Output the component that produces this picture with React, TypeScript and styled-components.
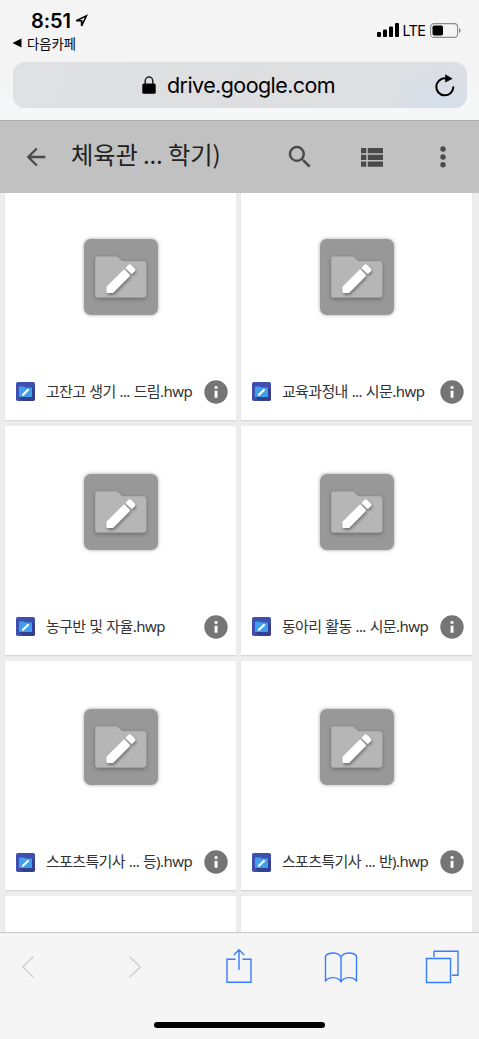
import React from 'react';
import styled, { createGlobalStyle } from 'styled-components';

const GlobalStyle = createGlobalStyle`
  * { box-sizing: border-box; }
  body { margin: 0; background: #f5f5f5; }
  svg { display: block; flex: none; }
`;

const Screen = styled.div`
  width: 479px;
  height: 1039px;
  overflow: hidden;
  display: flex;
  flex-direction: column;
  background: #f5f5f5;
  font-family: Inter, 'Noto Sans CJK KR', sans-serif;
  color: #000;
`;

const BrowserTop = styled.header`
  height: 121px;
  flex: none;
  background: linear-gradient(180deg, #f4f4f4 0%, #f4f4f4 50%, #f6f7f8 100%);
  border-bottom: 1px solid #ababab;
`;

const StatusBar = styled.div`
  height: 62px;
  display: flex;
  justify-content: space-between;
  padding: 9px 18px 0 12px;
`;

const Clock = styled.div`
  display: flex;
  align-items: center;
  height: 24px;
  padding-left: 19px;
  gap: 3px;
  font-size: 20px;
  font-weight: 600;
  letter-spacing: -0.1px;
`;

const BackToApp = styled.div`
  display: flex;
  align-items: center;
  height: 20px;
  gap: 5px;
  font-size: 13.3px;
  font-weight: 400;
`;

const Signals = styled.div`
  display: flex;
  align-items: center;
  height: 20px;
  margin-top: 11px;
`;

const Network = styled.span`
  width: 23px;
  font-size: 14.5px;
  font-weight: 400;
  letter-spacing: -0.7px;
  margin: 1px 4.5px 0 3.5px;
`;

const AddressBar = styled.div`
  height: 46px;
  margin: 0 12.5px;
  border-radius: 12px;
  display: flex;
  align-items: center;
  padding: 0 12px 0 129.5px;
  background:
    radial-gradient(ellipse 60px 50px at 94% 90%, #d5deeb 0%, rgba(213, 222, 235, 0) 100%),
    linear-gradient(100deg, #dfe1e2 0%, #dddee0 50%, #dedfe1 100%);
`;

const Domain = styled.span`
  flex: 1;
  margin: -1px 0 0 11px;
  font-size: 21.5px;
  letter-spacing: -0.58px;
`;

const DriveBar = styled.nav`
  height: 72px;
  flex: none;
  display: flex;
  align-items: center;
  padding: 0 28px 0 22px;
  background: #c1c1c1;
  color: #4a4a4a;
`;

const FolderTitle = styled.h1`
  margin: 0 0 6px 21px;
  width: 214px;
  white-space: nowrap;
  font: 400 24.3px/36px 'Noto Sans CJK KR', sans-serif;
  letter-spacing: -0.15px;
  color: #222;
`;

const Actions = styled.div`
  display: grid;
  grid-template-columns: 76px 74px 16px;
  align-items: center;
`;

const Files = styled.main`
  flex: none;
  height: 739px;
  overflow: hidden;
  background: #ededed;
`;

const Grid = styled.div`
  display: grid;
  grid-template-columns: 231px 231px;
  grid-auto-rows: 229.3px;
  gap: 6px 5px;
  margin: -2.5px 0 0 5.3px;
`;

const Card = styled.article`
  display: flex;
  flex-direction: column;
  align-items: center;
  padding-top: 48px;
  background: #fff;
  box-shadow: 0 1px 1px #d6d6d6;
`;

const Preview = styled.div`
  width: 74px;
  height: 76px;
  border-radius: 7px;
  background: #989898;
  box-shadow: 0 0 3px 1px rgba(0, 0, 0, 0.22);
`;

const FileRow = styled.div`
  width: 100%;
  height: 30px;
  margin-top: 62px;
  padding: 0 8.5px 0 11px;
  display: flex;
  align-items: center;
`;

const FileName = styled.span`
  flex: 1;
  margin: -2px 0 0 10.6px;
  white-space: nowrap;
  font: 400 15px/26px 'Noto Sans', 'Noto Sans CJK KR', sans-serif;
  letter-spacing: -0.62px;
  word-spacing: 0.6px;
  color: #333;
`;

const Extension = styled.span`
  letter-spacing: -0.5px;
`;

const BrowserBottom = styled.footer`
  flex: 1;
  border-top: 1px solid #c8c8c8;
  background: #f5f5f5;
  display: flex;
  flex-direction: column;
  align-items: center;
`;

const Tools = styled.div`
  width: 100%;
  height: 68px;
  padding-left: 20px;
  display: grid;
  grid-template-columns: 107px 98.5px 98.5px 101px 34px;
  align-items: center;
  color: #377dff;
`;

const HomeIndicator = styled.div`
  width: 171px;
  height: 6px;
  margin-top: 21px;
  border-radius: 3px;
  background: #000;
`;

const FolderArt = ({ id }: { id: number }) => (
  <svg width="74" height="76" viewBox="0.7 0 74 76">
    <defs>
      <filter id={`folder-shadow-${id}`} x="-20%" y="-20%" width="150%" height="150%">
        <feDropShadow dx="0" dy="1.5" stdDeviation="2" floodOpacity="0.32" />
      </filter>
      <filter id={`pencil-shadow-${id}`} x="-30%" y="-30%" width="170%" height="170%">
        <feDropShadow dx="1" dy="2" stdDeviation="1.8" floodOpacity="0.38" />
      </filter>
    </defs>
    <path
      filter={`url(#folder-shadow-${id})`}
      fill="#b6b6b6"
      d="M14 17.5h18.5c1 0 1.800.3 2.500 1l4 3.700h20.500a3.500 3.500 0 0 1 3.500 3.500V55a3.500 3.500 0 0 1-3.500 3.500h-45A2.500 2.500 0 0 1 12 56V19.500a2 2 0 0 1 2-2Z"
    />
    <g filter={`url(#pencil-shadow-${id})`} fill="#fff">
      <path d="M39.700 31.200a1.500 1.500 0 0 1 2.200 0l4.100 4.100a1.500 1.500 0 0 1 0 2.200L29.600 54h-5.200a1.200 1.200 0 0 1-1.200-1.200v-5.100Z" />
      <path d="m43 27.900 2-2a2 2 0 0 1 2.800 0l3.600 3.600a2 2 0 0 1 0 2.800l-2 2a1.300 1.300 0 0 1-1.800 0L43 29.700a1.300 1.300 0 0 1 0-1.800Z" />
    </g>
  </svg>
);

const FileTypeIcon = () => (
  <svg width="19" height="19" viewBox="0 0 19 19">
    <rect width="19" height="19" rx="1.800" fill="#3f4fb0" />
    <path d="m3 15 13-10 3 3v9.500L17.500 19H7Z" fill="#343f91" />
    <path d="M3 4.500h5.300l1 1H16V15H3Z" fill="#409feb" />
    <path d="m6 12.300 5.900-5.900 1.500 1.500L7.500 13.700H6Z" fill="#fff" />
  </svg>
);

const InfoIcon = () => (
  <svg width="24" height="24" viewBox="0 0 24 24">
    <circle cx="12" cy="12" r="11.700" fill="#757575" />
    <path d="M10.600 6.200h2.900v2.500h-2.900zM10.600 10.700h2.900v7h-2.900z" fill="#fff" />
  </svg>
);

const files = [
  '고잔고 생기 ... 드림',
  '교육과정내 ... 시문',
  '농구반 및 자율',
  '동아리 활동 ... 시문',
  '스포츠특기사 ... 등)',
  '스포츠특기사 ... 반)',
];

export default function App() {
  return (
    <Screen>
      <GlobalStyle />
      <BrowserTop>
        <StatusBar>
          <div>
            <Clock>
              8:51
              <svg width="14" height="14" viewBox="0 0 14 14" fill="none" stroke="#000" strokeWidth="1.600" strokeLinejoin="miter">
                <path d="M2.200 6.700 12.400 1.800 7.600 12V6.700Z" />
              </svg>
            </Clock>
            <BackToApp>
              <svg width="10" height="10" viewBox="0 0 10 10"><path d="M.5 5 9.500.5v9Z" /></svg>
              다음카페
            </BackToApp>
          </div>
          <Signals>
            <svg width="22" height="14" viewBox="0 0 22 14">
              <rect x="0" y="9" width="4" height="5" rx="1" />
              <rect x="6" y="6.500" width="4" height="7.500" rx="1" />
              <rect x="12" y="3.500" width="4" height="10.500" rx="1" />
              <rect x="18" y="0" width="4" height="14" rx="1" />
            </svg>
            <Network>LTE</Network>
            <svg width="31" height="15" viewBox="0 0 31 15">
              <rect x=".6" y=".6" width="27" height="13.800" rx="3.500" fill="none" stroke="#8c8c8c" strokeWidth="1.100" />
              <rect x="2.500" y="2.500" width="10.500" height="10" rx="1.700" />
              <path d="M29 5v5c1-.5 1.700-1.400 1.700-2.500S30 5.500 29 5Z" fill="#8c8c8c" />
            </svg>
          </Signals>
        </StatusBar>
        <AddressBar>
          <svg width="14" height="18" viewBox="0 0 14 18">
            <rect x=".3" y="7.500" width="13.400" height="10.300" rx="1.500" />
            <path d="M3.200 8V5a3.800 4 0 0 1 7.600 0v3" fill="none" stroke="#222" strokeWidth="1.500" />
          </svg>
          <Domain>drive.google.com</Domain>
          <svg width="20" height="23" viewBox="0 0 20 23">
            <path d="M18.300 13.300A8.500 8.500 0 1 1 10.500 4.400" fill="none" stroke="#000" strokeWidth="2" strokeLinecap="round" />
            <path d="m10.200.2 7.500 4.500-7.500 3.800Z" />
          </svg>
        </AddressBar>
      </BrowserTop>
      <DriveBar>
        <svg width="28" height="28" viewBox="0 0 24 24" fill="currentColor">
          <path d="M20 11H7.830l5.590-5.590L12 4l-8 8 8 8 1.410-1.410L7.830 13H20v-2z" />
        </svg>
        <FolderTitle>체육관 ... 학기)</FolderTitle>
        <Actions>
          <svg width="30" height="30" viewBox="0 0 24 24" fill="currentColor">
            <path d="M15.500 14h-.790l-.280-.270A6.470 6.470 0 0 0 16 9.500 6.500 6.500 0 1 0 9.500 16c1.610 0 3.090-.590 4.230-1.570l.270.280v.790l5 4.990L20.490 19l-4.990-5zm-6 0C7.010 14 5 11.990 5 9.500S7.010 5 9.500 5 14 7.010 14 9.500 11.990 14 9.500 14z" />
          </svg>
          <svg width="22" height="19" viewBox="0 0 22 19" fill="currentColor">
            <path d="M0 0h5.300v5.300H0zM6.800 0H22v5.300H6.800zM0 6.800h5.300v5.300H0zM6.800 6.800H22v5.300H6.800zM0 13.600h5.300v5.200H0zM6.800 13.600H22v5.200H6.800z" />
          </svg>
          <svg width="16" height="22" viewBox="0 0 16 22" fill="currentColor">
            <circle cx="8" cy="3" r="2.700" />
            <circle cx="8" cy="11" r="2.700" />
            <circle cx="8" cy="18.700" r="2.700" />
          </svg>
        </Actions>
      </DriveBar>
      <Files>
        <Grid>
          {files.map((name, i) => (
            <Card key={name}>
              <Preview><FolderArt id={i} /></Preview>
              <FileRow>
                <FileTypeIcon />
                <FileName>{name}<Extension>.hwp</Extension></FileName>
                <InfoIcon />
              </FileRow>
            </Card>
          ))}
          <Card />
          <Card />
        </Grid>
      </Files>
      <BrowserBottom>
        <Tools>
          <svg width="16" height="24" viewBox="0 0 16 24" fill="none" stroke="#d2d2d2" strokeWidth="1.600"><path d="M13.500 1.500 2.800 12l10.700 10.500" /></svg>
          <svg width="16" height="24" viewBox="0 0 16 24" fill="none" stroke="#d2d2d2" strokeWidth="1.600"><path d="m2.500 1.500 10.700 10.500L2.500 22.500" /></svg>
          <svg width="26" height="36" viewBox="0 0 26 36" fill="none" stroke="currentColor" strokeWidth="1.400">
            <path d="M9.500 10.300h-8.500V33.300h24V10.300h-8.500M13 21V.8M7.800 6 13 .8l5.200 5.200" />
          </svg>
          <svg width="34" height="32" viewBox="0 0 34 32" fill="none" stroke="currentColor" strokeWidth="1.400" strokeLinejoin="round">
            <path d="M17 6.300C14.500.8 5 .8 1.500 5v25C5 25.300 14 25.300 17 31 20 25.300 29 25.300 32.500 30V5C29 .8 19.500.8 17 6.300Zm0 0V31" />
          </svg>
          <svg width="34" height="34" viewBox="0 0 34 34" fill="none" stroke="currentColor" strokeWidth="1.400">
            <path d="M1.500 8.500h24v24h-24zM9 7V1.200h24v24h-6" />
          </svg>
        </Tools>
        <HomeIndicator />
      </BrowserBottom>
    </Screen>
  );
}
